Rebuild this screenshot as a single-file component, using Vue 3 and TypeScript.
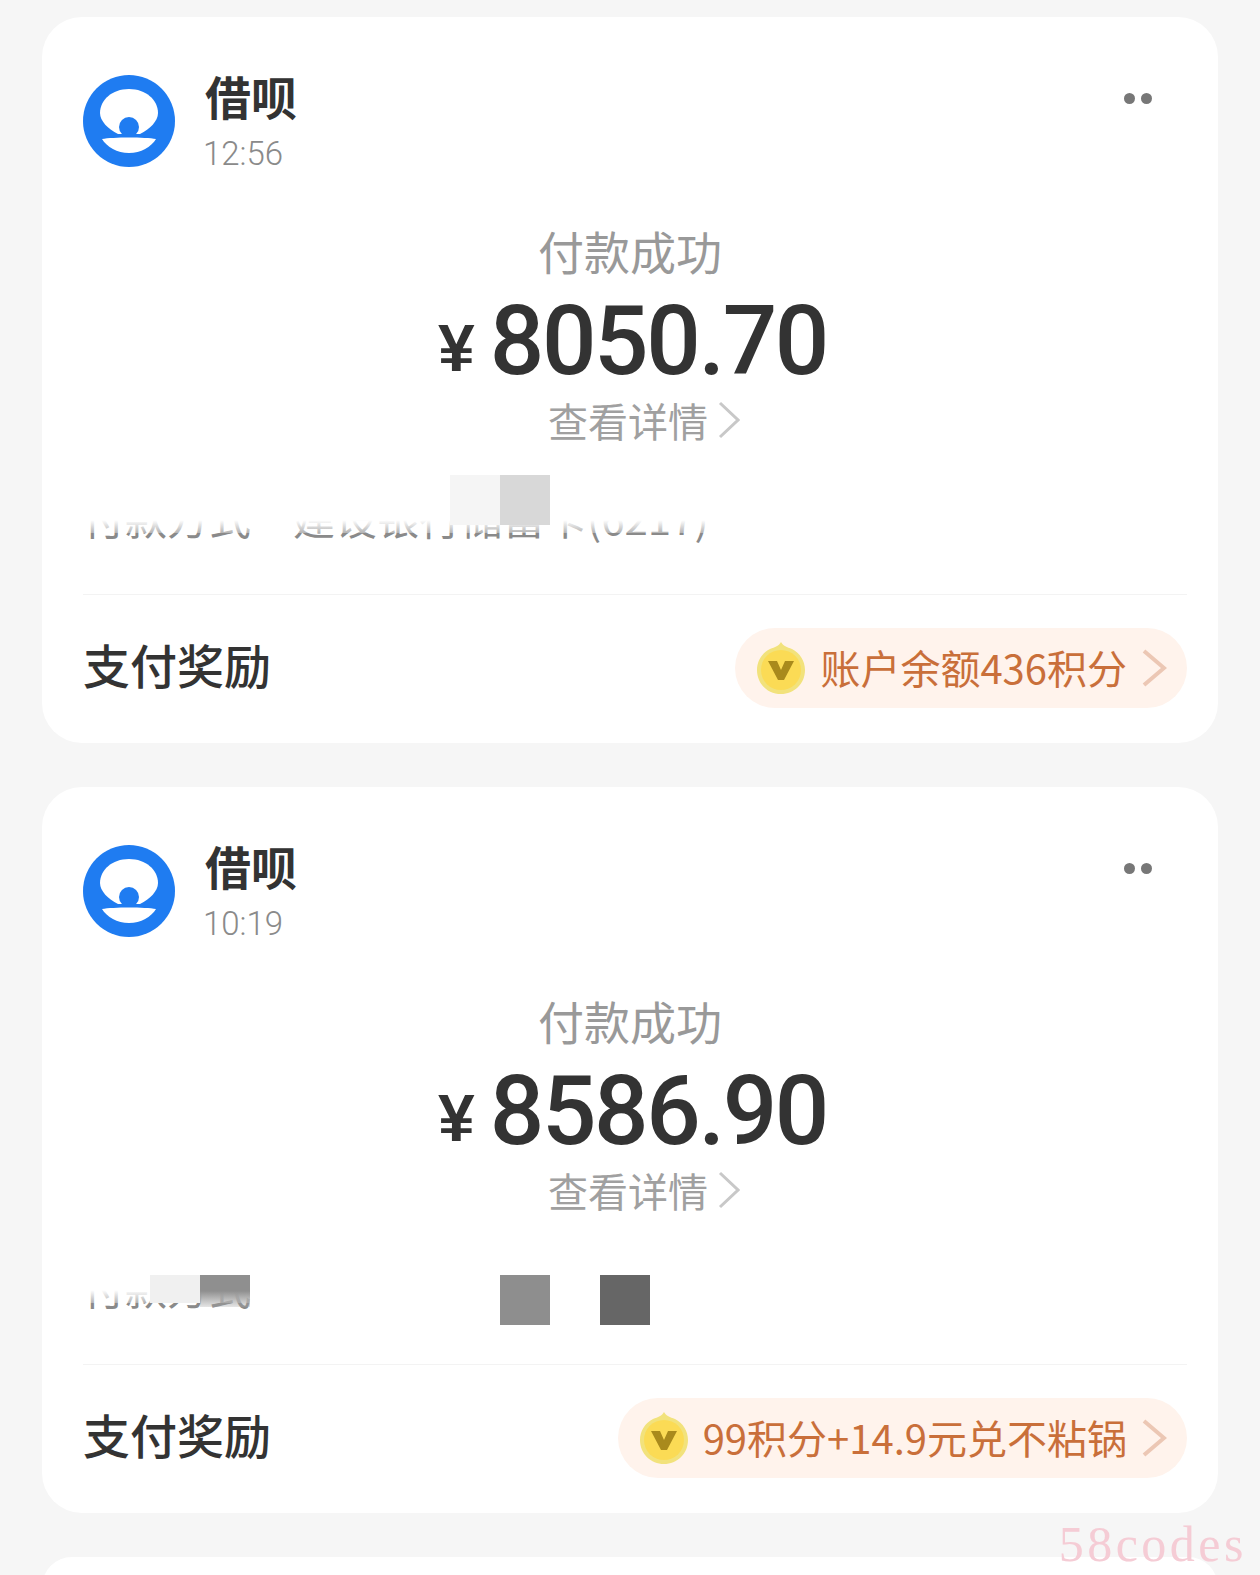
<script setup lang="ts">
interface Patch {
  left: number
  top: number
  height: number
  fill: string
}

interface Bill {
  time: string
  amount: string
  method: string
  reward: string
  patches: Patch[]
}

const bills: Bill[] = [
  {
    time: '12:56',
    amount: '8050.70',
    method: '付款方式　建设银行储蓄卡(6217)',
    reward: '账户余额436积分',
    patches: [
      { left: 367, top: 0, height: 50, fill: '#f5f5f5' },
      { left: 417, top: 0, height: 50, fill: '#d8d8d8' },
    ],
  },
  {
    time: '10:19',
    amount: '8586.90',
    method: '付款方式',
    reward: '99积分+14.9元兑不粘锅',
    patches: [
      { left: 67, top: 30, height: 28, fill: '#f0f0f0' },
      { left: 117, top: 30, height: 32, fill: 'linear-gradient(#8f8f8f 50%, rgba(170, 170, 170, 0.3))' },
      { left: 417, top: 30, height: 50, fill: '#8e8e8e' },
      { left: 517, top: 30, height: 50, fill: '#666666' },
    ],
  },
]
</script>

<template>
  <div class="page">
    <section v-for="bill in bills" :key="bill.time" class="card">
      <header class="head">
        <svg class="logo" viewBox="0 0 92 92" aria-label="借呗">
          <circle cx="46" cy="46" r="46" fill="#1f7cf1" />
          <path d="M46 14C29 14 17 25 17 38C17 46 25 54 35 59L57 59C67 54 75 46 75 38C75 25 63 14 46 14Z" fill="#fff" />
          <circle cx="46" cy="52" r="10" fill="#1f7cf1" />
          <path d="M19 64C30 62 62 62 73 64C68 72 58 78 46 78C34 78 24 72 19 64Z" fill="#fff" />
        </svg>
        <div class="names">
          <div class="name">借呗</div>
          <div class="time">{{ bill.time }}</div>
        </div>
        <div class="dots"><i /><i /></div>
      </header>

      <div class="status">付款成功</div>
      <div class="amount"><span class="yen">¥</span>{{ bill.amount }}</div>
      <div class="link">
        查看详情
        <svg class="link-arrow" viewBox="0 0 22 38"><path d="M2 2L20 19L2 36" /></svg>
      </div>

      <div class="method">
        <span class="method-text">{{ bill.method }}</span>
        <div class="method-cover" />
        <i
          v-for="patch in bill.patches"
          :key="patch.left"
          class="patch"
          :style="{ left: patch.left + 'px', top: patch.top + 'px', height: patch.height + 'px', background: patch.fill }"
        />
      </div>

      <div class="reward">
        <div class="reward-label">支付奖励</div>
        <div class="pill">
          <svg class="coin" viewBox="0 0 50 54">
            <path d="M25 1C27 5 31 6 36 8C44 12 49 20 49 29C49 43 38 53 25 53C12 53 1 43 1 29C1 20 6 12 14 8C19 6 23 5 25 1Z" fill="#f2e27c" />
            <circle cx="25" cy="29" r="20" fill="#fbdb55" />
            <path d="M12 20L21 20L25 29L29 20L38 20L28 39L22 39Z" fill="#a98a1c" />
          </svg>
          <span class="pill-text">{{ bill.reward }}</span>
          <svg class="pill-arrow" viewBox="0 0 26 38"><path d="M3 2L23 19L3 36" /></svg>
        </div>
      </div>
    </section>
    <section class="card card-next" />
    <div class="watermark">58codes</div>
  </div>
</template>

<style>
html,
body {
  margin: 0;
  background: #f6f6f6;
}
</style>

<style scoped>
.page {
  position: relative;
  box-sizing: border-box;
  width: 1260px;
  height: 1575px;
  padding: 17px 42px 0;
  overflow: hidden;
  display: flex;
  flex-direction: column;
  gap: 44px;
  background: #f6f6f6;
  font-family: "Noto Sans CJK SC", "Noto Sans", sans-serif;
}
.card {
  box-sizing: border-box;
  flex: none;
  height: 726px;
  padding: 58px 41px 0;
  background: #fff;
  border-radius: 40px;
}
.head {
  display: flex;
  align-items: flex-start;
  gap: 30px;
  height: 92px;
}
.logo {
  flex: none;
  width: 92px;
  height: 92px;
}
.names {
  flex: 1;
}
.name {
  margin-top: -10px;
  font-size: 46px;
  line-height: 60px;
  font-weight: 700;
  color: #333;
}
.time {
  margin: 6px 0 0 -2px;
  font-family: Roboto, sans-serif;
  font-size: 33px;
  line-height: 46px;
  font-weight: 300;
  color: #8a8a8a;
}
.dots {
  display: flex;
  gap: 6px;
  margin: 18px 25px 0 0;
}
.dots i {
  width: 11px;
  height: 11px;
  border-radius: 50%;
  background: #777;
}
.status {
  margin-top: 53px;
  text-align: center;
  font-size: 46px;
  line-height: 60px;
  color: #999;
}
.amount {
  display: flex;
  justify-content: center;
  align-items: baseline;
  margin-top: 11px;
  padding-left: 5px;
  font-family: Roboto, sans-serif;
  font-size: 96px;
  line-height: 100px;
  font-weight: 500;
  letter-spacing: -2.4px;
  color: #333;
}
.yen {
  position: relative;
  top: -3px;
  margin-right: 15px;
  font-family: "Liberation Sans", sans-serif;
  font-size: 66px;
  line-height: 1;
  font-weight: 700;
  letter-spacing: 0;
}
.link {
  display: flex;
  justify-content: center;
  align-items: center;
  gap: 10px;
  margin-top: 4px;
  padding-left: 28px;
  font-size: 40px;
  line-height: 50px;
  color: #a0a0a0;
}
.link-arrow {
  width: 22px;
  height: 38px;
  fill: none;
  stroke: #c8c8c8;
  stroke-width: 3;
}
.method {
  position: relative;
  height: 70px;
  margin-top: 30px;
  display: flex;
  align-items: flex-end;
}
.method-text {
  font-size: 42px;
  line-height: 56px;
  color: #8a8a8a;
  white-space: nowrap;
}
.method-cover {
  position: absolute;
  left: -41px;
  right: 0;
  top: 0;
  height: 58px;
  background: linear-gradient(#fff 78%, rgba(255, 255, 255, 0.35));
}
.patch {
  position: absolute;
  width: 50px;
}
.reward {
  display: flex;
  align-items: center;
  justify-content: space-between;
  margin: 49px -10px 0 0;
  padding-top: 29px;
  border-top: 1px solid #f3f3f3;
}
.reward-label {
  margin-bottom: 8px;
  font-size: 47px;
  line-height: 80px;
  font-weight: 500;
  color: #333;
}
.pill {
  display: flex;
  align-items: center;
  height: 80px;
  padding: 0 20px 0 21px;
  border-radius: 40px;
  background: #fff3ec;
}
.coin {
  flex: none;
  width: 50px;
  height: 54px;
  margin-right: 14px;
}
.pill-text {
  margin-bottom: 3px;
  font-size: 40px;
  line-height: 50px;
  color: #c96f3a;
  white-space: nowrap;
}
.pill-arrow {
  flex: none;
  width: 26px;
  height: 38px;
  margin-left: 14px;
  fill: none;
  stroke: #ecc7b4;
  stroke-width: 4;
}
.card-next {
  height: 60px;
}
.watermark {
  position: absolute;
  right: 13px;
  bottom: 3px;
  font-family: "Liberation Serif", serif;
  font-size: 50px;
  line-height: 56px;
  letter-spacing: 3.5px;
  color: #f5ccd5;
}
</style>
